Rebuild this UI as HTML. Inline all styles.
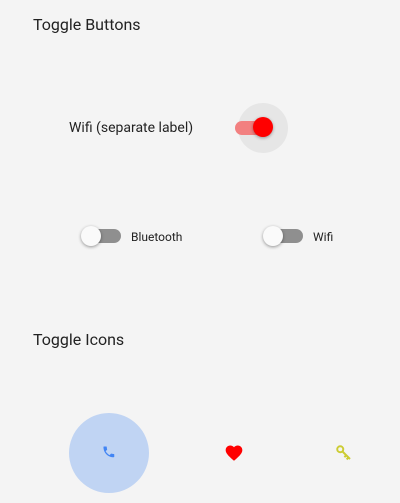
<!DOCTYPE html>
<html><head><style>
body{margin:0;width:400px;height:503px;background:#f4f4f4;font-family:Roboto,"Liberation Sans",sans-serif;color:#222;position:relative;overflow:hidden}
.a{position:absolute}
h{position:absolute;font-size:16px;color:#222}
.track{position:absolute;height:14px;border-radius:7px}
.thumb{position:absolute;width:20px;height:20px;border-radius:50%}
</style></head><body>
<h style="left:33px;top:15px">Toggle Buttons</h>
<div class="a" style="left:69px;top:120px;font-size:14px">Wifi (separate label)</div>
<div class="a" style="left:238px;top:103px;width:50px;height:50px;border-radius:50%;background:#e6e6e6"></div>
<div class="track" style="left:235px;top:121px;width:36px;background:#f28080"></div>
<div class="thumb" style="left:253px;top:117px;background:#ff0000;box-shadow:0 1px 3px rgba(0,0,0,.35)"></div>

<div class="track" style="left:83px;top:229px;width:38px;background:#8f8f8f"></div>
<div class="thumb" style="left:81px;top:226px;background:#fafafa;box-shadow:0 1px 3px rgba(0,0,0,.4)"></div>
<div class="a" style="left:131px;top:230px;font-size:12px">Bluetooth</div>
<div class="track" style="left:265px;top:229px;width:38px;background:#8f8f8f"></div>
<div class="thumb" style="left:263px;top:226px;background:#fafafa;box-shadow:0 1px 3px rgba(0,0,0,.4)"></div>
<div class="a" style="left:313px;top:230px;font-size:12px">Wifi</div>

<h style="left:33px;top:330px">Toggle Icons</h>
<div class="a" style="left:69px;top:413px;width:80px;height:80px;border-radius:50%;background:#c0d4f3"></div>
<svg class="a" style="left:101px;top:444px" width="16" height="16" viewBox="0 0 24 24"><path fill="#4285f4" d="M6.6 10.8c1.4 2.8 3.8 5.1 6.6 6.6l2.2-2.2c.3-.3.7-.4 1-.2 1.1.4 2.300.6 3.6.6.6 0 1 .4 1 1V20c0 .6-.4 1-1 1C10.6 21 3 13.4 3 4c0-.6.4-1 1-1h3.5c.6 0 1 .4 1 1 0 1.3.2 2.5.6 3.6.1.3 0 .7-.2 1z" transform="translate(1 1) scale(0.9)"/></svg>
<svg class="a" style="left:224px;top:443px" width="20" height="20" viewBox="0 0 24 24"><path fill="#ff0000" d="M12 21.35l-1.45-1.32C5.4 15.36 2 12.28 2 8.5 2 5.42 4.420 3 7.5 3c1.74 0 3.41.81 4.5 2.090C13.09 3.81 14.76 3 16.5 3 19.58 3 22 5.42 22 8.5c0 3.78-3.4 6.86-8.55 11.54z"/></svg>
<svg class="a" style="left:335px;top:444px" width="18" height="18" viewBox="0 0 24 24"><g fill="none" stroke="#cccc33" stroke-width="2.6"><circle cx="7" cy="7" r="4"/><path d="M10 10l10 10M15 15l-2.5 2.5M18 18l-2.5 2.5"/></g></svg>
</body></html>
